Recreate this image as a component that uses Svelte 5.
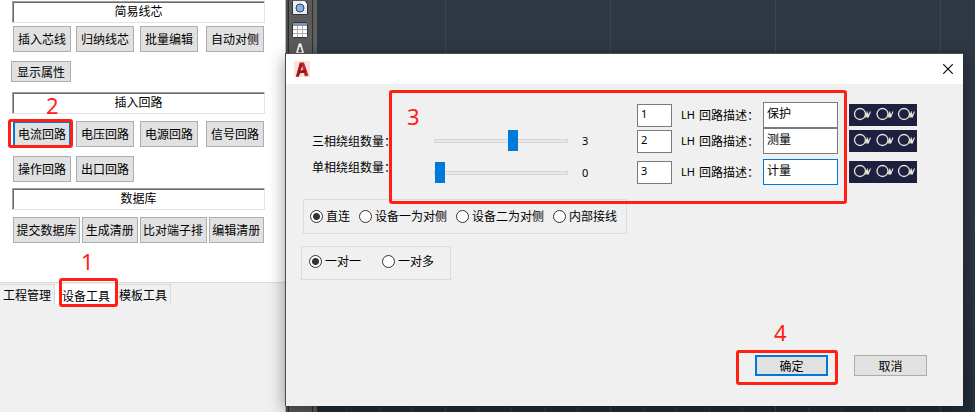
<script lang="ts">
	interface Circuit {
		no: string;
		desc: string;
	}

	let activeTab = $state('设备工具');
	let threePhase = $state(3);
	let singlePhase = $state(0);
	let wiring = $state('直连');
	let pairing = $state('一对一');

	let circuits: Circuit[] = $state([
		{ no: '1', desc: '保护' },
		{ no: '2', desc: '测量' },
		{ no: '3', desc: '计量' }
	]);

	const TABS = ['工程管理', '设备工具', '模板工具'];
	const CORE_TOOLS = ['插入芯线', '归纳线芯', '批量编辑', '自动对侧'];
	const LOOP_TOOLS = ['电压回路', '电源回路', '信号回路', '操作回路', '出口回路'];
	const DB_TOOLS = ['提交数据库', '生成清册', '比对端子排', '编辑清册'];
	const WIRINGS = ['直连', '设备一为对侧', '设备二为对侧', '内部接线'];
	const PAIRINGS = ['一对一', '一对多'];
</script>

<div class="app">
	<aside class="panel">
		<div class="tools">
			<h2>简易线芯</h2>
			<div class="grid">
				{#each CORE_TOOLS as tool}
					<button class="tool">{tool}</button>
				{/each}
			</div>
			<button class="tool props">显示属性</button>

			<h2>插入回路</h2>
			<div class="grid loops">
				<div class="target">
					<button class="tool focused">电流回路</button>
					<span class="mark mark-tool"></span>
					<span class="step step-tool">2</span>
				</div>
				{#each LOOP_TOOLS as tool}
					<button class="tool">{tool}</button>
				{/each}
			</div>

			<h2>数据库</h2>
			<div class="row">
				{#each DB_TOOLS as tool}
					<button class="tool auto">{tool}</button>
				{/each}
			</div>
		</div>

		<div class="tabs" role="tablist">
			{#each TABS as tab}
				<button
					class="tab"
					class:active={tab === activeTab}
					role="tab"
					aria-selected={tab === activeTab}
					onclick={() => (activeTab = tab)}
				>
					{tab}
				</button>
			{/each}
			<span class="mark mark-tab"></span>
			<span class="step step-tab">1</span>
		</div>
	</aside>

	<div class="toolbar">
		<button aria-label="块">
			<svg viewBox="0 0 16 16">
				<path d="M.5 -2H12L15.500 3V13.500H.5Z" fill="#e9edf2" stroke="#303236" />
				<path d="M11 -1V3.500H15" fill="#fff" />
				<circle cx="8" cy="7" r="4" fill="#8fb2de" stroke="#24436f" />
			</svg>
		</button>
		<button aria-label="表格">
			<svg viewBox="0 0 16 16">
				<rect x=".5" y=".5" width="15" height="15" rx="1" fill="#fafafa" stroke="#30343d" />
				<path d="M1 1H15V4H1Z" fill="#8193ad" />
				<path d="M1 7.500H15M1 11.500H15M5.500 4V15M10.500 4V15" stroke="#aeb0b4" />
			</svg>
		</button>
		<button aria-label="多行文字">
			<svg viewBox="0 0 16 16">
				<path
					d="M6.500 0H9.500L14 15H10.500L9.800 12H6.200L5.500 15H2ZM8 4L6.500 9H9.500Z"
					fill="#f4f4f4"
					fill-rule="evenodd"
					stroke="#3b3b3b"
					stroke-width=".6"
				/>
			</svg>
		</button>
	</div>

	<main class="canvas"></main>

	<div class="dialog" role="dialog" aria-label="插入电流回路">
		<header>
			<svg class="logo" viewBox="0 0 16 16">
				<rect width="16" height="16" fill="#f9e3dc" />
				<path d="M6 1.500H10L14.500 14.500L11 15.500L9.800 12H6L4.800 15.500H2Z" fill="#c4252b" />
				<path d="M6 1.500L2 15.500H4.800L8.300 4.500Z" fill="#a2161d" />
				<path d="M8.200 5L6.500 9.800H9.300Z" fill="#f3c9c2" />
				<path d="M5 10L11.500 8.500L12.500 11L5 12.500Z" fill="#951219" />
			</svg>
			<button class="close" aria-label="关闭">
				<svg viewBox="0 0 10 10">
					<path d="M.3 .3L9.700 9.700M9.700 .3L.3 9.700" stroke="#000" stroke-width="1.1" />
				</svg>
			</button>
		</header>

		<div class="body">
			<div class="form">
				<div class="captions">
					<label for="three">三相绕组数量：</label>
					<label for="single">单相绕组数量：</label>
				</div>
				<div class="sliders">
					<div class="slider">
						<input id="three" type="range" min="0" max="5" bind:value={threePhase} />
						<output for="three">{threePhase}</output>
					</div>
					<div class="slider">
						<input id="single" type="range" min="0" max="5" bind:value={singlePhase} />
						<output for="single">{singlePhase}</output>
					</div>
				</div>
				<div class="circuits">
					{#each circuits as circuit, i}
						<div class="circuit">
							<input class="no" id="no-{i}" type="text" bind:value={circuit.no} />
							<label class="unit" for="no-{i}">LH</label>
							<label class="caption" for="desc-{i}">回路描述：</label>
							<input class="desc" id="desc-{i}" type="text" bind:value={circuit.desc} />
							<svg class="preview" viewBox="0 0 68 22">
								<rect width="68" height="22" fill="#1f1f3f" />
								{#each [11, 33.5, 55] as cx}
									<g transform="translate({cx} 10)" fill="none" stroke="#e3e8da">
										<circle r="5.500" stroke-width="1.3" />
										<path d="M5.500 3.500L7.500 -2.500M7 3.500L7.800 -1L8 3.500L10.500 -2.500" stroke-width="1.1" />
									</g>
								{/each}
							</svg>
						</div>
					{/each}
				</div>
				<span class="mark mark-form"></span>
				<span class="step step-form">3</span>
			</div>

			<div class="group wiring">
				{#each WIRINGS as option}
					<label><input type="radio" name="wiring" value={option} bind:group={wiring} />{option}</label>
				{/each}
			</div>

			<div class="group pairing">
				{#each PAIRINGS as option}
					<label><input type="radio" name="pairing" value={option} bind:group={pairing} />{option}</label>
				{/each}
			</div>

			<footer>
				<div class="target">
					<button class="action primary">确定</button>
					<span class="mark mark-ok"></span>
					<span class="step step-ok">4</span>
				</div>
				<button class="action">取消</button>
			</footer>
		</div>
	</div>
</div>

<style>
	:global(body) {
		margin: 0;
	}

	.app {
		position: relative;
		display: flex;
		min-height: 100vh;
		overflow: hidden;
		font: 12px/18px 'Noto Sans CJK SC', sans-serif;
		color: #000;
	}

	.app * {
		box-sizing: border-box;
	}

	button,
	input {
		margin: 0;
		padding: 0;
		font: inherit;
		color: inherit;
	}

	svg {
		display: block;
	}

	/* left palette */
	.panel {
		flex: none;
		display: flex;
		flex-direction: column;
		width: 286px;
		background: #f0f0f0;
		border-right: 1px solid #bdbdbd;
	}

	.tools {
		padding: 1px 19px 39px 12px;
		background: #fff;
		border-bottom: 1px solid #dadada;
	}

	h2 {
		width: 253px;
		height: 22px;
		margin: 0;
		font-size: 12px;
		font-weight: 400;
		line-height: 17px;
		text-align: center;
		border: 1px solid;
		border-color: #a0a0a0 #e3e3e3 #e3e3e3 #a0a0a0;
		box-shadow: inset 1px 1px #696969;
	}

	.grid {
		display: grid;
		grid-template-columns: 63px 64px 66px 60px;
		padding: 3px 0 9px 1px;
	}

	.loops {
		row-gap: 9px;
		padding: 7px 0 6px 1px;
	}

	.row {
		display: flex;
		gap: 2px;
		padding: 7px 2px 0 1px;
	}

	.tool {
		width: 58px;
		height: 26px;
		line-height: 24px;
		white-space: nowrap;
		background: #e1e1e1;
		border: 1px solid #adadad;
	}

	.tool.focused {
		border: 2px solid #0078d7;
		line-height: 22px;
	}

	.tool.props {
		display: block;
		width: 60px;
		height: 21px;
		margin: 0 0 10px -1px;
		line-height: 19px;
	}

	.tool.auto {
		width: auto;
		padding: 0 2px;
		flex: 1 1 auto;
	}

	.target {
		position: relative;
	}

	.tabs {
		position: relative;
		display: flex;
		padding-top: 1px;
	}

	.tab {
		height: 20px;
		padding: 0 3px;
		line-height: 18px;
		background: #f0f0f0;
		border: solid #dadada;
		border-width: 1px 1px 0 0;
	}

	.tab.active {
		padding: 2px 5px 0 7px;
		background: #fff;
		border-color: #fff;
	}

	/* drawing area */
	.toolbar {
		flex: none;
		width: 31px;
		display: flex;
		flex-direction: column;
		align-items: center;
		gap: 4px;
		padding-right: 3px;
		background: linear-gradient(
			90deg,
			#4d4d4d 2px,
			#2b2b2b 2px 3px,
			#5b5b5b 3px 26px,
			#2f2f2f 26px 27px,
			#5f5f5f 27px
		);
	}

	.toolbar button {
		width: 16px;
		height: 17px;
		background: none;
		border: 0;
	}

	.toolbar svg {
		width: 16px;
		height: 16px;
	}

	.canvas {
		flex: 1;
		background:
			repeating-linear-gradient(90deg, transparent 0 128px, #3b4655 128px 129px, transparent 129px 165px),
			repeating-linear-gradient(90deg, transparent 0 29px, #303b46 29px 30px, transparent 30px 33px),
			linear-gradient(#2e3843 0 50%, #222c38);
	}

	/* dialog */
	.dialog {
		position: absolute;
		top: 53px;
		left: 285px;
		right: 12px;
		background: #f0f0f0;
		border: solid #4b4b4b;
		border-width: 1px 0 0 1px;
		box-shadow: 0 4px 16px rgba(0, 0, 0, 0.4);
	}

	header {
		display: flex;
		justify-content: space-between;
		align-items: center;
		height: 30px;
		padding: 0 10px 0 8px;
		background: #fff;
	}

	.logo {
		width: 16px;
		height: 16px;
	}

	.close {
		background: none;
		border: 0;
	}

	.close svg {
		width: 10px;
		height: 10px;
	}

	.body {
		padding: 18px 0 30px 15px;
	}

	.form {
		position: relative;
		display: flex;
		padding-left: 11px;
		margin-bottom: 10px;
	}

	.captions {
		width: 122px;
		padding-top: 26px;
	}

	.captions label {
		display: block;
		line-height: 26px;
		white-space: nowrap;
	}

	.sliders {
		width: 203px;
		padding-top: 23px;
	}

	.slider {
		display: flex;
		align-items: center;
		gap: 14px;
		height: 32px;
	}

	input[type='range'] {
		appearance: none;
		width: 134px;
		height: 21px;
		background: none;
	}

	input[type='range']::-webkit-slider-runnable-track {
		height: 4px;
		background: #e7eaea;
		border: 1px solid #d6d6d6;
	}

	input[type='range']::-webkit-slider-thumb {
		appearance: none;
		width: 10px;
		height: 21px;
		margin-top: -10px;
		background: #007ad9;
	}

	output,
	.no,
	.unit {
		font-family: 'Noto Sans', sans-serif;
		font-size: 11px;
	}

	.circuit {
		display: flex;
		align-items: center;
		height: 26px;
	}

	.circuit:last-child {
		margin-top: 5px;
	}

	input[type='text'] {
		background: #fff;
		border: 1px solid #7a7a7a;
		outline: 0;
	}

	.no {
		width: 35px;
		height: 23px;
		padding: 0 3px 4px;
	}

	.unit {
		width: 27px;
		padding-left: 9px;
	}

	.caption {
		width: 64px;
	}

	.desc {
		width: 75px;
		height: 26px;
		padding: 0 3px 6px;
	}

	.circuit:last-child .desc {
		border-color: #0078d7;
	}

	.preview {
		width: 68px;
		height: 22px;
		margin-left: 11px;
	}

	.group {
		display: flex;
		width: fit-content;
		border: 1px solid #dcdcdc;
	}

	.group label {
		display: flex;
		align-items: center;
		gap: 3px;
		height: 18px;
	}

	.wiring {
		gap: 9px;
		height: 35px;
		padding: 7px 9px 0 6px;
		margin: 0 0 12px 2px;
	}

	.pairing {
		gap: 21px;
		height: 34px;
		padding: 5px 16px 0 7px;
	}

	input[type='radio'] {
		appearance: none;
		width: 13px;
		height: 13px;
		background: #fff;
		border: 1px solid #333;
		border-radius: 50%;
	}

	input[type='radio']:checked {
		background: radial-gradient(circle, #333 3px, #fff 4px);
	}

	footer {
		display: flex;
		justify-content: flex-end;
		gap: 26px;
		padding-right: 36px;
		margin-top: 75px;
	}

	.action {
		display: block;
		width: 73px;
		height: 21px;
		line-height: 19px;
		background: #e1e1e1;
		border: 1px solid #adadad;
	}

	.action.primary {
		line-height: 17px;
		border: 2px solid #0078d7;
	}

	/* walkthrough marks */
	.mark {
		position: absolute;
		border: 3px solid #ff2013;
		border-radius: 3px;
		pointer-events: none;
	}

	.step {
		position: absolute;
		font: 22px/22px 'Noto Sans', sans-serif;
		color: #ff2013;
		pointer-events: none;
	}

	.mark-tool {
		inset: -2px 0 -1px -5px;
		width: 65px;
	}

	.step-tool {
		top: -27px;
		left: 33px;
	}

	.mark-tab {
		top: -5px;
		left: 59px;
		width: 59px;
		height: 29px;
	}

	.step-tab {
		top: -33px;
		left: 81px;
	}

	.mark-form {
		top: -12px;
		left: 88px;
		width: 458px;
		height: 114px;
	}

	.step-form {
		top: 3px;
		left: 106px;
	}

	.mark-ok {
		inset: -5px -10px -9px -19px;
	}

	.step-ok {
		top: -34px;
		left: 19px;
	}
</style>
